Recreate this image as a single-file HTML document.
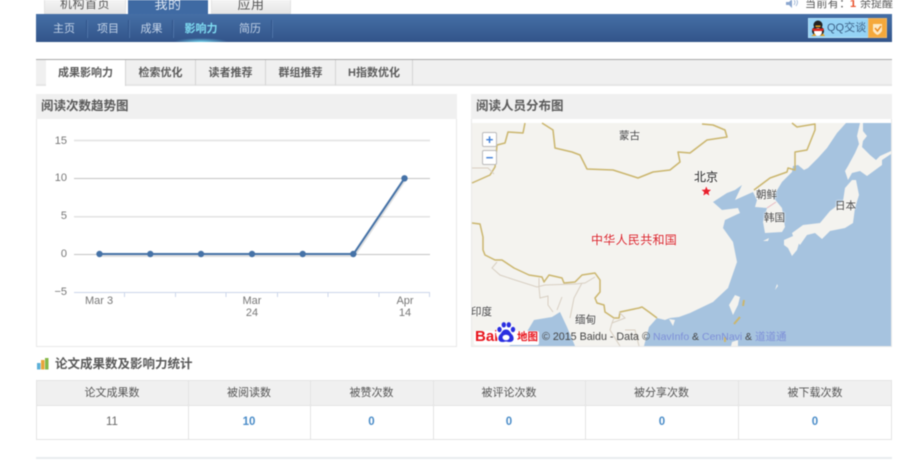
<!DOCTYPE html>
<html lang="zh">
<head>
<meta charset="utf-8">
<title>影响力</title>
<style>
html,body{margin:0;padding:0;background:#fff;}
#p{position:relative;width:900px;height:461px;overflow:hidden;background:#fff;font-family:"Liberation Sans","Noto Sans CJK SC",sans-serif;font-size:11px;color:#555;filter:blur(.5px);}
#p div{position:absolute;box-sizing:border-box;}
.t{white-space:nowrap;}
.top{top:-6px;height:20px;line-height:19px;font-size:12px;text-align:center;color:#555;background:linear-gradient(#fafafa,#e6e6e6);border:1px solid #e2e2e2;letter-spacing:.5px;}
.sub{top:14px;height:28px;line-height:30px;color:#c3d3e8;font-size:11px;text-align:center;}
.sep{top:20px;width:2px;height:18px;background:#2f5389;border-right:1px solid #4f74a8;}
.tab{top:60px;height:25px;line-height:26px;text-align:center;font-size:11px;font-weight:bold;color:#5c5c5c;border-right:1px solid #d4d4d4;}
.h{top:94px;height:25px;background:#f0f0f0;font-size:12.5px;font-weight:bold;color:#5a5a5a;line-height:25px;padding-left:5px;white-space:nowrap;}
.y{left:35px;width:32px;text-align:right;color:#777;font-size:11px;line-height:12px;}
.x{color:#777;font-size:11px;line-height:12px;text-align:center;width:50px;}
.th{top:381px;height:24px;line-height:25px;text-align:center;font-size:11px;color:#555;}
.td{top:406px;height:33px;line-height:32px;text-align:center;font-size:11.5px;color:#4a8cc8;font-weight:bold;}
.v{top:380px;width:1px;height:60px;background:#e4e4e4;}
svg{position:absolute;left:0;top:0;}
.m{color:#444;font-size:10.5px;text-shadow:0 0 2px #fff,0 0 2px #fff;white-space:nowrap;}
</style>
</head>
<body>
<div id="p">
  <!-- top tabs -->
  <div class="top" style="left:44px;width:82px;">机构首页</div>
  <div class="top" style="left:128px;width:80px;background:#3f6aa3;border-color:#3f6aa3;color:#dfe8f3;height:21px;font-size:13px;">我的</div>
  <div class="top" style="left:211px;width:80px;font-size:13px;">应用</div>

  <!-- top right -->
  <svg width="900" height="14" style="left:0;top:0">
    <path d="M786 2h3l3-3v9l-3-3h-3z" fill="#8aa6cf"/>
    <path d="M794 0q2 2 0 5M796 -1q3 3 0 7" stroke="#a5bbd9" fill="none"/>
  </svg>
  <div class="t" style="left:805px;top:-4px;line-height:16px;font-size:11px;color:#555;letter-spacing:.4px;">当前有：</div>
  <div class="t" style="left:850px;top:-4px;line-height:16px;font-size:11px;font-weight:bold;color:#e8502a;">1</div>
  <div class="t" style="left:860px;top:-4px;line-height:16px;font-size:11px;color:#555;">余提醒</div>

  <!-- blue bar -->
  <div style="left:36px;top:14px;width:856px;height:28px;background:linear-gradient(#456fa6,#32548a);"></div>
  <div class="sub" style="left:44px;width:40px;">主页</div>
  <div class="sep" style="left:86px;"></div>
  <div class="sub" style="left:88px;width:40px;">项目</div>
  <div class="sep" style="left:128px;"></div>
  <div class="sub" style="left:131px;width:41px;">成果</div>
  <div class="sep" style="left:172px;"></div>
  <div class="sub" style="left:175px;width:52px;color:#7fdcf2;font-weight:bold;">影响力</div>
  <div style="left:174px;top:38px;width:54px;height:4px;background:radial-gradient(ellipse at 50% 100%,#6fd4ee 0,rgba(111,212,238,0) 70%);"></div>
  <div class="sub" style="left:230px;width:40px;">简历</div>
  <div class="sep" style="left:271px;"></div>

  <!-- QQ button -->
  <div style="left:808px;top:18px;width:61px;height:20px;background:#95d3f5;border:1px solid #b5e2f8;"></div>
  <div class="t" style="left:827px;top:18px;line-height:20px;font-size:11px;color:#3a5f86;">QQ交谈</div>
  <div style="left:868px;top:18px;width:19px;height:20px;background:#f5a83a;border:1px solid #f0b868;"></div>
  <svg width="900" height="461">
    <path d="M873 24h9v7q-2 3-4.500 4q-2.500-1-4.500-4z" fill="#fde9c4"/>
    <path d="M875 28l2.500 3l3.500-5" stroke="#ea8a1e" stroke-width="1.500" fill="none"/>
    <ellipse cx="818" cy="25" rx="4.500" ry="4.500" fill="#222"/>
    <ellipse cx="818" cy="31" rx="6" ry="5" fill="#222"/>
    <ellipse cx="818" cy="32" rx="4" ry="4" fill="#fff"/>
    <path d="M812 28.500h12l-1 2.500h-10z" fill="#d9261c"/>
    <path d="M811 36h5l-1 -2.500zM820 36h5l-2 -2.500z" fill="#e8a01c"/>
    <rect x="815.500" y="25.500" width="5" height="1.500" fill="#e8a01c"/>
  </svg>

  <!-- second tabs -->
  <div style="left:36px;top:59px;width:856px;height:27px;background:#f0f0f0;border-top:1px solid #a9a9a9;border-bottom:2px solid #e6e6e6;"></div>
  <div class="tab" style="left:46px;width:80px;background:#fff;height:26px;">成果影响力</div>
  <div class="tab" style="left:126px;width:70px;">检索优化</div>
  <div class="tab" style="left:196px;width:70px;">读者推荐</div>
  <div class="tab" style="left:266px;width:70px;">群组推荐</div>
  <div class="tab" style="left:336px;width:77px;">H指数优化</div>

  <!-- left panel -->
  <div style="left:36px;top:94px;width:421px;height:253px;border:1px solid #e8e8e8;"></div>
  <div class="h" style="left:36px;width:421px;">阅读次数趋势图</div>
  <div class="y" style="top:135px;">15</div>
  <div class="y" style="top:172px;">10</div>
  <div class="y" style="top:210px;">5</div>
  <div class="y" style="top:248px;">0</div>
  <div class="y" style="top:286px;">−5</div>
  <div class="x" style="left:74px;top:295px;">Mar 3</div>
  <div class="x" style="left:227px;top:295px;">Mar<br>24</div>
  <div class="x" style="left:380px;top:295px;">Apr<br>14</div>
  <svg width="900" height="461">
    <path d="M74 140.500H430" stroke="#e2e2e2" stroke-width="1.500"/>
    <path d="M74 178.500H430" stroke="#c4c4c4"/>
    <path d="M74 216.700H430" stroke="#e2e2e2" stroke-width="1.500"/>
    <path d="M74 254.500H430" stroke="#c4c4c4"/>
    <path d="M74 292.500H430" stroke="#ccd6eb"/>
    <path d="M124.500 292v5M175.500 292v5M226 292v5M277.500 292v5M328 292v5M379 292v5M429.500 292v5" stroke="#ccd6eb"/>
    <path d="M100 255.500L354 255.500L405 179.500" stroke="#000" stroke-opacity=".12" stroke-width="3" fill="none"/>
    <path d="M99.500 254H353.500L404.500 178.300" stroke="#4572a7" stroke-width="2" fill="none"/>
    <g fill="#4572a7">
      <circle cx="99.500" cy="254" r="3.200"/><circle cx="150.300" cy="254" r="3.200"/><circle cx="201" cy="254" r="3.200"/>
      <circle cx="252" cy="254" r="3.200"/><circle cx="302.700" cy="254" r="3.200"/><circle cx="353.300" cy="254" r="3.200"/>
      <circle cx="404.500" cy="178.300" r="3.200"/>
    </g>
  </svg>

  <!-- right panel -->
  <div style="left:471px;top:94px;width:421px;height:253px;border:1px solid #e8e8e8;"></div>
  <div class="h" style="left:471px;width:421px;">阅读人员分布图</div>
  <svg width="900" height="461">
    <rect x="472" y="123" width="419" height="223" fill="#a6c3df"/>
    <g fill="#f4f3ef">
      <path d="M846 123L837 133L827 148L818 158L808 168L804 170L798 165L793 166L792 172L782 182L773 197L782 208L785 227L782 232L765 233L763 222L767 208L755 207L757 200L753 192L735 200L742 185L735 190L727 193L713 202L722 210L738 208L740 213L725 220L723 228L733 242L737 262L728 288L713 302L690 313L679 317L670 318L665 320L657 318L649 327L644 346L575 346L567 327L560 312L552 317L534 320L525 335L509 346L472 346L472 123Z"/>
      <path d="M860 123L863 123L863 131L867 136L863 141L862 147L870 155L876 160L880 156L891 151L891 154L882 160L882 165L867 176L860 171L852 173L848 180L845 171L848 166L855 153L859 144L857 136Z"/>
      <path d="M852 180L856 180L859 195L855 208L853 223L845 228L830 231L822 239L815 233L807 235L800 245L793 236L792 233L803 225L820 223L830 211L843 201L845 188Z"/>
      <path d="M784 240L793 236L800 240L797 250L792 256L788 248L784 245Z"/>
      <path d="M729 305L735 295L740 297L738 305L733 315Z"/>
      <path d="M732 342L738 340L738 346L731 346Z"/>
      <path d="M763 241L769 238L768 241Z"/>
      <path d="M775 290L777 284L778 286Z"/>
      <path d="M669 319L675 320L673 326Z"/>
    </g>
    <g fill="none" stroke="#cbb66e" stroke-width="1.500" stroke-linejoin="round">
      <path d="M525 123L523 133L508 132L505 143L497 145L495 167L490 175L472 183"/>
      <path d="M542 123L553 130L555 148L572 152L580 155L587 169L613 170L638 178L653 172L670 170L680 162L678 152L690 153L707 140L727 137L725 130L713 125L702 124"/>
      <path d="M792 123L797 127L815 124L815 130L807 150L795 152L795 170L788 168L787 172L770 178L754 190"/>
      <path d="M472 223L480 224L483 237L483 250L485 255L495 260L502 260L514 268L529 275L542 277L544 282L549 275L562 278L564 283L575 282L582 275L595 273L600 280L600 292L595 298L597 303L604 305L605 312L614 318L619 318L620 312L639 308L642 307L649 312L657 318"/>
      <path d="M744 300L743 306M740 317L734 324M725 337L725 342" stroke-width="2"/>
    </g>
    <g fill="none" stroke="#d8cfc2" stroke-width="1">
      <path d="M472 168H488L494 174"/>
      <path d="M497 262L492 268L500 275L515 280L537 287L545 285L575 284L585 283L595 277"/>
      <path d="M539 278V287L540 298L548 296L548 305L553 312M562 297L557 310"/>
      <path d="M582 283L574 298L570 318"/>
      <path d="M614 318L612 323L610 330L620 346M619 312L625 318L612 323M625 330H635L639 346"/>
      <path d="M767 208L776 202" stroke="#e8b8c0"/>
    </g>
    <path d="M706.300 185.500l1.500 3.800 4.100.3-3.100 2.600 1 4-3.500-2.200-3.500 2.200 1-4-3.100-2.600 4.100-.3z" fill="#e8202c" stroke="#fff" stroke-width=".6"/>
  </svg>
  <div class="m" style="left:619px;top:128px;">蒙古</div>
  <div class="m" style="left:694px;top:168px;font-size:12px;color:#222;">北京</div>
  <div class="m" style="left:591px;top:231px;font-size:12px;color:#d8232a;letter-spacing:.3px;">中华人民共和国</div>
  <div class="m" style="left:756px;top:187px;">朝鲜</div>
  <div class="m" style="left:764px;top:210px;">韩国</div>
  <div class="m" style="left:835px;top:198px;">日本</div>
  <div class="m" style="left:575px;top:312px;">缅甸</div>
  <div class="m" style="left:471px;top:304px;">印度</div>
  <!-- zoom control -->
  <div style="left:482px;top:132px;width:15px;height:15px;background:#fff;border:1px solid #bbb;border-radius:2px;color:#3f7fd8;font:bold 13px/13px 'Liberation Sans',sans-serif;text-align:center;">+</div>
  <div style="left:482px;top:150px;width:15px;height:15px;background:#fff;border:1px solid #bbb;border-radius:2px;color:#3f7fd8;font:bold 13px/13px 'Liberation Sans',sans-serif;text-align:center;">−</div>
  <!-- baidu logo -->
  <div style="left:474px;top:331px;width:65px;height:14px;background:#fff;border-radius:2px;"></div>
  <div class="t" style="left:475px;top:329px;font:bold 15px/16px 'Liberation Sans',sans-serif;color:#e8141c;">Bai</div>
  <div class="t" style="left:517px;top:330px;font-size:10.500px;line-height:14px;font-weight:bold;color:#e8141c;">地图</div>
  <svg width="900" height="461">
    <circle cx="506" cy="333" r="10" fill="#fff"/>
    <path d="M506 329.500c3.500 0 4 3 6 5s3 7-2 7.500c-2 .2-2.500-.5-4-.5s-2 .7-4 .5c-5-.5-4-5.500-2-7.500s2.500-5 6-5z" fill="#2a2ee0"/>
    <ellipse cx="506" cy="337.500" rx="3.500" ry="2.800" fill="#fff"/>
    <ellipse cx="499.500" cy="329.500" rx="2.200" ry="2.700" fill="#2a2ee0"/><ellipse cx="503.800" cy="324.800" rx="2.200" ry="2.700" fill="#2a2ee0"/>
    <ellipse cx="508.800" cy="324.800" rx="2.200" ry="2.700" fill="#2a2ee0"/><ellipse cx="513" cy="329.500" rx="2.200" ry="2.700" fill="#2a2ee0"/>
  </svg>
  <div class="t" style="left:542px;top:330px;font-size:10.700px;line-height:14px;color:#444;">© 2015 Baidu - Data ©</div>
  <div class="t" style="left:653px;top:330px;font-size:10.500px;line-height:14px;color:#7d8fd8;">NavInfo</div>
  <div class="t" style="left:692px;top:330px;font-size:10.500px;line-height:14px;color:#444;">&amp;</div>
  <div class="t" style="left:702px;top:330px;font-size:10.500px;line-height:14px;color:#7d8fd8;">CenNavi</div>
  <div class="t" style="left:745px;top:330px;font-size:10.500px;line-height:14px;color:#444;">&amp;</div>
  <div class="t" style="left:755px;top:330px;font-size:10.500px;line-height:14px;color:#7d8fd8;">道道通</div>

  <!-- stats title -->
  <svg width="900" height="461">
    <rect x="37" y="363" width="3.500" height="6.500" fill="#5cb0d8"/>
    <rect x="41" y="360" width="3.500" height="9.500" fill="#e8a53a"/>
    <rect x="45" y="358" width="3.500" height="11.500" fill="#86b84a"/>
  </svg>
  <div class="t" style="left:55px;top:356px;line-height:16px;font-size:12.500px;font-weight:bold;color:#5a5a5a;">论文成果数及影响力统计</div>

  <!-- table -->
  <div style="left:36px;top:380px;width:856px;height:60px;border:1px solid #e4e4e4;"></div>
  <div style="left:37px;top:381px;width:854px;height:25px;background:#f0f0f0;border-bottom:1px solid #e4e4e4;"></div>
  <div class="v" style="left:188px;"></div>
  <div class="v" style="left:310px;"></div>
  <div class="v" style="left:433px;"></div>
  <div class="v" style="left:585px;"></div>
  <div class="v" style="left:738px;"></div>
  <div class="th" style="left:36px;width:152px;">论文成果数</div>
  <div class="th" style="left:188px;width:122px;">被阅读数</div>
  <div class="th" style="left:310px;width:123px;">被赞次数</div>
  <div class="th" style="left:433px;width:152px;">被评论次数</div>
  <div class="th" style="left:585px;width:153px;">被分享次数</div>
  <div class="th" style="left:738px;width:154px;">被下载次数</div>
  <div class="td" style="left:36px;width:152px;color:#666;font-weight:normal;">11</div>
  <div class="td" style="left:188px;width:122px;">10</div>
  <div class="td" style="left:310px;width:123px;">0</div>
  <div class="td" style="left:433px;width:152px;">0</div>
  <div class="td" style="left:585px;width:154px;">0</div>
  <div class="td" style="left:738px;width:154px;">0</div>

  <div style="left:36px;top:457px;width:856px;height:2px;background:#e8ecef;"></div>
</div>
</body>
</html>
